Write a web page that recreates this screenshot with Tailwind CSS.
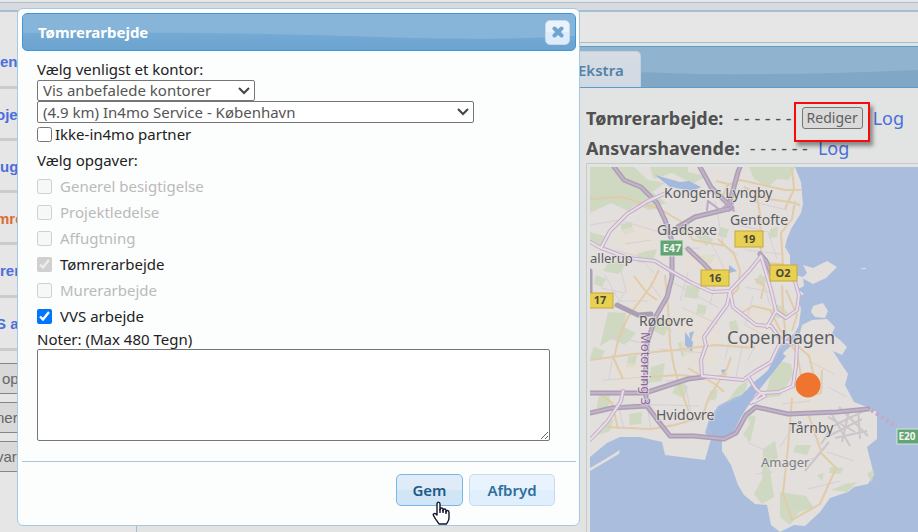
<!DOCTYPE html>
<html lang="da">
<head>
  <meta charset="UTF-8">
  <meta name="viewport" content="width=device-width, initial-scale=1">
  <title>Tømrerarbejde</title>
  <script src="https://cdn.jsdelivr.net/npm/@tailwindcss/browser@4"></script>
</head>
<body class="relative h-screen overflow-hidden bg-[#e6e6e6] font-['Noto_Sans',sans-serif] text-[15px] leading-5 text-[#222222]">

  <div class="flex h-full flex-col">
    <!-- Top bar -->
    <div class="mt-[2px] h-[10px] shrink-0 border-t border-b-2 border-t-[#a5bfd2] border-b-[#a5bfd2] bg-[#d9dade]"></div>

    <div class="flex min-h-0 flex-1">
      <!-- Job list -->
      <aside class="flex w-[137px] shrink-0 flex-col border-r border-[#a5bfd2] bg-[#e6e6e6] font-['Liberation_Sans',sans-serif]">
        <nav class="flex flex-col pt-6 text-[15px] font-bold text-[#4a6fdc]">
          <a href="#" class="h-[53px] border-b-[3px] border-[#cbcbcb] pt-4 leading-5">en</a>
          <a href="#" class="-ml-1 h-[52px] border-b-[3px] border-[#cbcbcb] pt-4 leading-5">oje</a>
          <a href="#" class="h-[52px] border-b-[3px] border-[#cbcbcb] pt-4 leading-5">ug</a>
          <a href="#" class="-ml-1 h-[52px] border-b-[3px] border-[#cbcbcb] pt-4 leading-5 text-[#dc6c34]">mre</a>
          <a href="#" class="h-[53px] border-b-[3px] border-[#cbcbcb] pt-4 leading-5">rer</a>
          <a href="#" class="-ml-1 h-[53px] border-b-[3px] border-[#cbcbcb] pt-4 leading-5">S a</a>
        </nav>
        <div class="mt-3 flex flex-col gap-2 text-[15px] text-[#666666]">
          <button class="h-[31px] border-y border-[#858585] bg-[#d9d9d9] pl-[2px] text-left">op</button>
          <button class="-ml-1 h-[31px] border-y border-[#858585] bg-[#d9d9d9] text-left">ner</button>
          <button class="-ml-1 h-[31px] border-y border-[#858585] bg-[#d9d9d9] text-left">var</button>
        </div>
      </aside>

      <!-- Case details -->
      <main class="flex min-w-0 flex-1 flex-col bg-[#e2e4e3]">
        <div class="h-[31px] shrink-0 border-b border-[#a5bfd2] bg-[#e6e6e6]"></div>
        <div class="relative mt-[3px] flex h-[42px] shrink-0 items-end border-y border-[#5d9bc8] bg-[#80a7c6] pl-[404px]">
          <svg class="absolute inset-0 size-full" viewBox="0 0 781 40" preserveAspectRatio="none" aria-hidden="true">
            <path d="M0 0H781V23Q680 28 560 27Q300 18 0 16Z" fill="#90b3cf"/>
          </svg>
          <a href="#" class="relative flex h-9 items-center rounded-t-[5px] border border-b-0 border-[#c0d2e0] bg-linear-to-b from-[#d7dce3] to-[#d0d9e3] pr-4 pl-9 font-semibold text-[#5282a8]">Ekstra</a>
        </div>

        <div class="flex min-h-0 flex-1 flex-col pl-[449px] text-lg text-[#505050]">
          <div class="mt-[15px] flex h-[30px] shrink-0 items-center gap-[10px] whitespace-nowrap">
            <span class="font-bold">Tømrerarbejde:</span>
            <span>- - - - - -</span>
            <span class="relative flex">
              <button class="h-[22px] w-[61px] rounded-[3px] border border-[#767676] bg-[#dadada] text-sm text-[#606060]">Rediger</button>
              <span class="absolute -top-[5px] -left-2 h-[40px] w-[76px] border-2 border-[#fb0a0a] shadow-[3px_4px_4px_rgba(0,0,0,0.4)]"></span>
            </span>
            <a href="#" class="text-[#4a6fdc]">Log</a>
          </div>
          <div class="flex h-[30px] shrink-0 items-center gap-[10px] whitespace-nowrap">
            <span class="font-bold">Ansvarshavende:</span>
            <span>- - - - - -</span>
            <a href="#" class="text-[#4a6fdc]">Log</a>
          </div>

          <div class="min-h-0 flex-1 border-t border-l border-[#c6cac9] pt-[3px] pl-[3px]">
            <svg class="size-full bg-[#aabddc]" viewBox="0 0 328 365" preserveAspectRatio="xMinYMin slice" role="img" aria-label="Copenhagen" font-family="Noto Sans, sans-serif">
              <!-- land -->
              <g fill="#e2dfdd">
                <path d="M0 0H205L211 15L213 37L211 46L201 62L197 72L195 80L200 88L200 97L207 103L205 108L213 110L214 119L208 122L214 127L208 130L211 142L209 158L205 166L195 174L188 184L178 203L163 218L151 228L141 232L128 239L119 253L115 266L121 272L115 293L75 288L72 275L50 270L30 270L17 276L0 290Z"/>
                <path d="M213 98L223 101L237 94L247 100L236 111L223 117L212 111L217 106Z"/>
                <path d="M223 139L233 136L238 144L235 151L225 150L221 145ZM212 158L222 153L237 152L245 160L242 167L250 173L257 180L252 188L243 184L250 195L258 207L255 218L264 235L277 240L287 245L287 272L277 280L284 308L278 317L264 320L258 325L240 331L230 345L215 359L204 358L190 365L181 358L177 338L165 337L154 328L148 318L141 298L132 284L132 275L150 250L165 224L182 206L194 185L208 173Z"/>
                <path d="M0 301L12 294L30 283L29 287L0 304ZM271 101h5v1h-4z"/>
              </g>
              <!-- parks and forest -->
              <g fill="#c9d7b8" opacity="0.75">
                <path d="M0 0H44L58 13L75 16L62 25L76 36L61 43L45 38L38 44L21 36L0 46ZM60 0H98V5L116 9L103 17L82 6L64 12ZM159 0H205L199 13L187 12L178 20L164 12Z"/>
                <path d="M0 65L18 70L10 80L0 76ZM20 93L36 97L29 107L13 104ZM47 86L67 82L63 94L49 96ZM18 145L36 146L34 160L46 166L35 178L22 172L10 179L14 162ZM66 150L82 153L74 169L60 162ZM4 180L15 184L10 193L0 191ZM109 89L125 88L121 97L110 98Z"/>
                <path d="M86 57L96 59L93 66L84 64ZM113 63L123 73L116 79L106 69ZM97 118L110 121L107 132L94 130ZM61 200L75 196L72 214L58 216ZM9 228L19 224L20 236L12 247L7 240ZM39 247L52 245L51 257L40 258ZM88 214L98 220L94 231L82 226ZM186 193L201 197L203 208L190 229L175 231L180 210ZM173 282L185 274L188 291L179 296L184 330L172 337L164 327L172 312ZM190 325L216 329L224 341L209 345L200 358L190 350ZM241 323L255 317L267 315L257 325ZM277 307L284 302L282 316ZM240 300L254 301L250 307L239 306ZM206 278L221 278L217 288L203 285ZM227 308L234 306L232 314Z"/>
                <path d="M148 220L158 213L155 225L137 235ZM185 137L193 140L201 150L187 151L181 144ZM170 107L178 112L172 119L165 116ZM139 155L146 153L149 163L141 167ZM194 103L199 106L191 110ZM156 247L166 250L160 276L153 267L160 257Z"/>
                <path d="M30 57L41 55L44 65L34 68ZM6 108L16 112L12 120L4 117ZM88 176L100 172L103 185L92 190ZM38 190L47 188L45 200L36 201ZM130 60L139 62L136 71L128 69ZM108 137L117 139L114 150L106 147ZM180 62L188 60L187 70L179 71ZM12 255L24 252L20 264L8 268ZM120 224L128 222L126 232L118 234Z"/>
              </g>
              <!-- built-up areas -->
              <g fill="#e8e0d4" opacity="0.6">
                <path d="M22 66L60 54L68 78L38 92ZM91 81L128 90L147 106L118 113L96 96ZM32 112L68 106L79 134L42 146ZM85 145L130 148L128 195L97 206ZM23 195L58 198L52 222L22 219ZM151 139L174 137L190 163L164 168ZM214 178L240 184L248 208L222 206ZM195 224L230 221L229 249L203 244Z"/>
              </g>
              <!-- lakes -->
              <path d="M65 8L90 15L99 14L111 20L103 24L80 20ZM95 165L103 175L102 185L95 178ZM139 98L147 104L139 106ZM99 166L104 164L101 174ZM131 203L136 202L134 210ZM118 258L132 239L149 232L164 215L179 203L190 185L196 189L181 208L165 228L151 250L141 270L127 276Z" fill="#a3bade"/>
              <!-- airport -->
              <g fill="none" stroke="#cac6ca" stroke-width="2">
                <path d="M231 277L243 259L276 243M241 246L260 279M249 240L278 269M235 271L272 252M215 304L239 275M259 244L252 275M268 241L270 272M245 271L277 264M238 250L265 265"/>
              </g>
              <!-- local streets -->
              <g fill="none" stroke="#d6d0d6" stroke-width="1">
                <path d="M0 58L30 53L75 67M4 78L48 89L64 106M15 108L29 134L58 134M28 92L36 124L23 142M78 82L110 81M82 115L129 141M90 53L119 72L135 103M125 34L133 77L148 88M145 57L178 65L187 92M160 34L197 43M155 83L192 87M156 120L184 126M163 129L155 158L180 171M173 112L180 139M59 146L82 165M93 141L128 157M17 168L52 176M69 182L115 186M23 187L19 212M76 214L123 210M41 237L109 239M95 216L101 247M118 160L109 198M143 160L135 192M152 181L145 214M169 171L157 194M219 194L244 207M192 237L220 234M158 276L187 288M166 307L183 305M191 300L224 291M206 255L190 280M237 285L264 294M218 322L250 314M238 220L257 230M13 213L55 210M28 236L34 263M55 224L61 263M126 112L120 138M98 105L90 134M60 116L71 131M35 77L61 73M11 121L34 126M105 47L97 60"/>
              </g>
              <!-- main streets -->
              <g fill="none" stroke="#e2cba9" stroke-width="2" stroke-linejoin="round">
                <path d="M0 32L32 30L70 42L90 54L103 73L136 79M69 103L61 119L38 150L28 173L24 192L33 212M44 109L57 126L67 133M0 193L44 187L86 183L125 178L165 181M75 108L78 140L80 176L84 200L91 223L99 245M60 210L88 208L121 211L137 207M141 190L137 202L119 230L112 250L85 258L61 262L17 260M98 201L125 217L134 225M128 72L144 87L150 103L148 122L140 130M136 19L150 13L195 23L211 23M154 20L178 32L200 35L210 38M202 1L204 22L195 42M205 34L202 52L191 66L193 99M166 23L170 47L171 88L174 96L192 97M192 118L193 143L196 171L207 186L211 209M232 203L231 226L218 229M218 246L232 287L246 301L230 337L202 353L193 327L198 280L202 231M151 146L163 139L180 143L190 163L219 189L224 209M165 112L174 118L171 132M196 123L207 148L202 164M9 226L22 236L28 262M126 14L138 17L132 31"/>
              </g>
              <!-- motorways -->
              <g fill="none" stroke-linejoin="round" stroke-linecap="round">
                <g stroke="#aaa0b3" stroke-width="5">
                  <path d="M24 0L34 13L51 20L67 36L75 53L82 74L82 110L77 130L66 149L57 176L55 219L57 239M110 0L121 20L139 38L148 5L150 0M88 60L105 50L142 41M98 82L114 97L126 110M0 226L55 226L98 212L114 210M0 246L22 241L57 239L69 255L80 269L104 269L134 272L146 266L156 248L166 240L198 247L247 245L278 242M170 87L176 94L182 108M27 138L48 148L61 147M0 104L0 132"/>
                </g>
                <g stroke="#c5b1cb" stroke-width="2">
                  <path d="M24 0L34 13L51 20L67 36L75 53L82 74L82 110L77 130L66 149L57 176L55 219L57 239M110 0L121 20L139 38L148 5L150 0M88 60L105 50L142 41M98 82L114 97L126 110M0 226L55 226L98 212L114 210M0 246L22 241L57 239L69 255L80 269L104 269L134 272L146 266L156 248L166 240L198 247L247 245L278 242M170 87L176 94L182 108"/>
                </g>
                <g stroke="#c6adcb" stroke-width="4">
                  <path d="M0 75L11 81L20 64L37 47L58 34L76 26M11 81L38 91L65 94L81 104L102 116L122 125L140 124L143 140L157 151L166 158L181 159L192 174L207 177L206 198L203 219L189 225L171 226L161 236M140 124L160 103L171 89M140 124L137 138L121 160L114 170L116 179L111 193L112 209L153 213L164 205L181 195L189 178L198 169M171 89L175 102L181 123L186 144L196 151L207 143L209 128L204 111M186 144L177 160M0 273L17 255L31 234L33 224M159 211L166 222L175 229L164 235"/>
                </g>
                <g stroke="#e6dfe6" stroke-width="2">
                  <path d="M0 75L11 81L20 64L37 47L58 34L76 26M11 81L38 91L65 94L81 104L102 116L122 125L140 124L143 140L157 151L166 158L181 159L192 174L207 177L206 198L203 219L189 225L171 226L161 236M140 124L160 103L171 89M140 124L137 138L121 160L114 170L116 179L111 193L112 209L153 213L164 205L181 195L189 178L198 169M171 89L175 102L181 123L186 144L196 151L207 143L209 128L204 111M186 144L177 160M0 273L17 255L31 234L33 224M159 211L166 222L175 229L164 235"/>
                </g>
                <path d="M117 43L118 34L130 43L139 36L144 44M139 44L144 34" stroke="#bda6c6" stroke-width="2"/>
                <path d="M281 243L292 250L306 260" stroke="#c3a8c9" stroke-width="4" stroke-dasharray="3 3" stroke-linecap="butt"/>
              </g>
              <!-- road shields -->
              <g fill="#e8d150" stroke="#c9a640">
                <rect x="145" y="64" width="28" height="16"/>
                <rect x="111" y="103" width="28" height="16"/>
                <rect x="-2" y="126" width="25" height="15"/>
                <rect x="180" y="98" width="27" height="16"/>
              </g>
              <g fill="#63a474" stroke="#d7e5d8">
                <rect x="70" y="73" width="23" height="16"/>
                <rect x="307" y="262" width="26" height="15"/>
              </g>
              <g font-size="11" font-weight="700" fill="#4d4a38" text-anchor="middle">
                <text x="159" y="76">19</text>
                <text x="125" y="115">16</text>
                <text x="10" y="137">17</text>
                <text x="193" y="110">O2</text>
                <text x="82" y="85" fill="#f1f5ef">E47</text>
                <text x="317" y="273" font-size="10" fill="#f1f5ef">E20</text>
              </g>
              <!-- place names -->
              <g font-size="14" fill="#5c5c62" stroke="#e5e2df" stroke-opacity="0.7" stroke-width="2" paint-order="stroke">
                <text x="74" y="31">Kongens Lyngby</text>
                <text x="140" y="58">Gentofte</text>
                <text x="67" y="68">Gladsaxe</text>
                <text x="0" y="96" font-size="13">allerup</text>
                <text x="49" y="159">Rødovre</text>
                <text x="137" y="177" font-size="18">Copenhagen</text>
                <text x="66" y="253">Hvidovre</text>
                <text x="199" y="266">Tårnby</text>
                <text x="171" y="300" font-size="13" fill="#7d7d82">Amager</text>
                <text transform="translate(51 165) rotate(90)" font-size="13" fill="#8c62a0">Motorring 3</text>
              </g>
              <circle cx="218" cy="218" r="12.5" fill="#ef742f"/>
            </svg>
          </div>
        </div>
      </main>
    </div>
  </div>

  <!-- Dialog -->
  <div role="dialog" aria-labelledby="dialog-title" class="absolute top-2 left-[17px] w-[563px] max-w-full rounded-[6px] border border-[#a6c9e2] bg-[#fcfdfd] p-1 pr-[3px]">
    <header class="relative flex h-[38px] items-center justify-between overflow-hidden rounded-[5px] border border-[#4297d7] bg-linear-to-b from-[#7db0d7] to-[#6ca4d0] pr-[5px] pl-[15px]">
      <svg class="absolute inset-0 size-full" viewBox="0 0 553 36" preserveAspectRatio="none" aria-hidden="true">
        <path d="M0 0H553V22Q490 26 390 24Q190 17 0 19Z" fill="#87b5d9"/>
      </svg>
      <h1 id="dialog-title" class="relative font-bold text-white">Tømrerarbejde</h1>
      <button aria-label="Luk" class="relative flex size-[25px] items-center justify-center rounded-[5px] border border-[#c5dbec] bg-linear-to-b from-[#eaf3fc] from-50% to-[#dcecfb] to-50%">
        <svg class="size-3" viewBox="0 0 12 12" fill="none" stroke="#6fa5d0" stroke-width="4" stroke-linecap="round"><path d="M2.5 2.5L9.5 9.5M9.5 2.5L2.5 9.5"/></svg>
      </button>
    </header>

    <form class="flex flex-col px-[15px] pt-2">
      <label for="office-filter" class="h-[21px]">Vælg venligst et kontor:</label>
      <div class="grid w-[218px] items-center">
        <select id="office-filter" class="col-start-1 row-start-1 h-[21px] appearance-none rounded-[2px] border border-[#767676] bg-white pl-[5px] leading-[19px] text-[#555555]">
          <option>Vis anbefalede kontorer</option>
        </select>
        <svg class="pointer-events-none col-start-1 row-start-1 mr-[5px] h-2 w-3 justify-self-end" viewBox="0 0 12 8" fill="none" stroke="#444444" stroke-width="2"><path d="M1 1L6 6L11 1"/></svg>
      </div>
      <div class="grid w-[437px] items-center">
        <select aria-label="Kontor" class="col-start-1 row-start-1 h-[22px] appearance-none rounded-[2px] border border-[#767676] bg-white pl-[5px] leading-5 text-[#555555]">
          <option>(4.9 km) In4mo Service - København</option>
        </select>
        <svg class="pointer-events-none col-start-1 row-start-1 mr-[5px] h-2 w-3 justify-self-end" viewBox="0 0 12 8" fill="none" stroke="#444444" stroke-width="2"><path d="M1 1L6 6L11 1"/></svg>
      </div>
      <label class="flex h-[22px] items-center gap-[3px]"><input type="checkbox" class="size-[15px]">Ikke-in4mo partner</label>

      <fieldset class="mt-[5px]">
        <legend class="h-[23px]">Vælg opgaver:</legend>
        <label class="flex h-[26px] items-center gap-2 text-[#bababa]"><input type="checkbox" disabled class="size-[15px]">Generel besigtigelse</label>
        <label class="flex h-[26px] items-center gap-2 text-[#bababa]"><input type="checkbox" disabled class="size-[15px]">Projektledelse</label>
        <label class="flex h-[26px] items-center gap-2 text-[#bababa]"><input type="checkbox" disabled class="size-[15px]">Affugtning</label>
        <label class="flex h-[26px] items-center gap-2"><input type="checkbox" checked disabled class="size-[15px]">Tømrerarbejde</label>
        <label class="flex h-[26px] items-center gap-2 text-[#bababa]"><input type="checkbox" disabled class="size-[15px]">Murerarbejde</label>
        <label class="flex h-[26px] items-center gap-2"><input type="checkbox" checked class="size-[15px]">VVS arbejde</label>
      </fieldset>
      <label for="notes" class="h-[20px]">Noter: (Max 480 Tegn)</label>
      <textarea id="notes" maxlength="480" class="h-[92px] w-[513px] rounded-[2px] border border-[#767676] bg-white"></textarea>
    </form>

    <footer class="mt-5 flex gap-[6px] border-t border-[#a6c9e2] pt-3 pr-[21px] pb-[15px] font-semibold">
      <button class="relative ml-auto h-8 w-[67px] rounded-[5px] border border-[#79b7e7] bg-linear-to-b from-[#dfecf8] from-50% to-[#d0e5f5] to-50% text-[#1d5987]">
        Gem
        <svg class="absolute top-[26px] left-[35px] h-6 w-[18px]" viewBox="0 0 18 24" fill="white" stroke="#15152a" stroke-width="1.4" stroke-linejoin="round" aria-hidden="true">
          <path d="M5 14V3C5 0.500 8 0.500 8 3V9C8 6.500 11 6.500 11 8.500V10C11 7.500 14 7.500 14 9.500V11C14 9 17 9 17 11.500V17C17 20 15.500 21 14.500 23H7C6 21 3 18 1.500 14.500C0.500 12.500 3 11.500 5 14Z"/>
          <path d="M8 8V12M11 9V12M14 10V13" fill="none"/>
        </svg>
      </button>
      <button class="h-8 w-[86px] rounded-[5px] border border-[#c5dbec] bg-linear-to-b from-[#e8f3fd] from-50% to-[#dfeffc] to-50% text-[#2e6e9e]">Afbryd</button>
    </footer>
  </div>
</body>
</html>
